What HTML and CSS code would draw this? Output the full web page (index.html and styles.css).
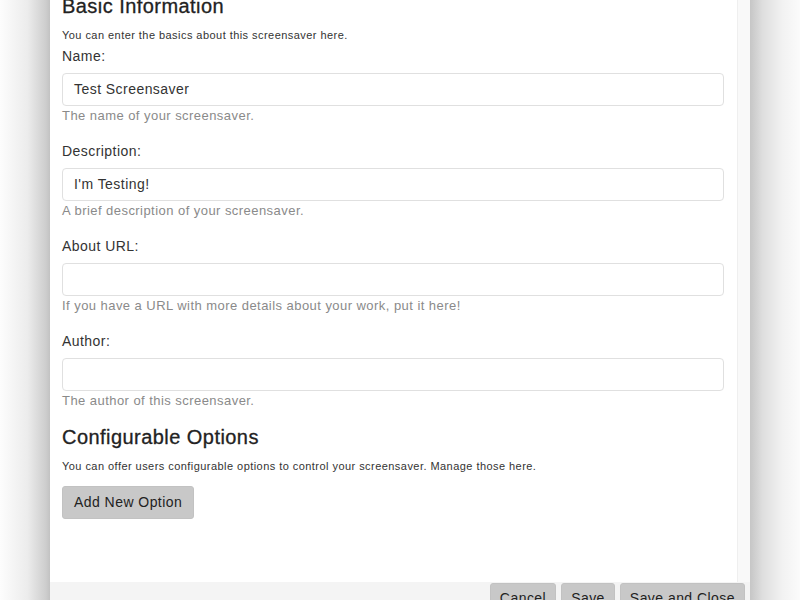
FILE: index.html
```html
<!DOCTYPE html>
<html>
<head>
<meta charset="utf-8">
<link rel="stylesheet" href="styles.css">
</head>
<body>
<div class="desk">
  <div class="shade shade-left"></div>
  <div class="window">
    <div class="scroll">
      <div class="content">
        <h2 class="heading first">Basic Information</h2>
        <p class="intro">You can enter the basics about this screensaver here.</p>
        <div class="group">
          <label class="label">Name:</label>
          <div class="input">Test Screensaver</div>
          <div class="help">The name of your screensaver.</div>
        </div>
        <div class="group">
          <label class="label">Description:</label>
          <div class="input">I'm Testing!</div>
          <div class="help">A brief description of your screensaver.</div>
        </div>
        <div class="group">
          <label class="label">About URL:</label>
          <div class="input"></div>
          <div class="help">If you have a URL with more details about your work, put it here!</div>
        </div>
        <div class="group last">
          <label class="label">Author:</label>
          <div class="input"></div>
          <div class="help">The author of this screensaver.</div>
        </div>
        <h2 class="heading">Configurable Options</h2>
        <p class="intro">You can offer users configurable options to control your screensaver. Manage those here.</p>
        <button class="btn">Add New Option</button>
      </div>
      <div class="track"></div>
    </div>
    <div class="footer">
      <button class="btn">Cancel</button>
      <button class="btn">Save</button>
      <button class="btn">Save and Close</button>
    </div>
  </div>
  <div class="shade shade-right"></div>
</div>
</body>
</html>
```
FILE: styles.css
```css
html, body {
  margin: 0;
  padding: 0;
  height: 100%;
  overflow: hidden;
}
body {
  font-family: "Liberation Sans", Arial, sans-serif;
  color: #333;
  background: #fff;
  letter-spacing: 0.45px;
}
.desk {
  display: flex;
  height: 600px;
  width: 800px;
}
.shade {
  flex: none;
}
.shade-left {
  width: 50px;
  background: linear-gradient(to right, #fdfdfd 0%, #ececec 55%, #cdcdcd 92%, #c2c2c2 100%);
}
.shade-right {
  width: 50px;
  background: linear-gradient(to right, #c6c6c6 0%, #dedede 25%, #f2f2f2 65%, #fbfbfb 100%);
}
.window {
  flex: none;
  width: 700px;
  display: flex;
  flex-direction: column;
  background: #fff;
}
.scroll {
  flex: 1;
  display: flex;
  overflow: hidden;
}
.content {
  flex: 1;
  padding: 0 13px 0 12px;
  margin-top: -6px;
}
.track {
  flex: none;
  width: 12px;
  background: #f9f9f9;
  border-left: 1px solid #efefef;
}
.heading {
  margin: 0;
  font-size: 20px;
  line-height: 24px;
  font-weight: normal;
  color: #222;
  letter-spacing: 0.45px;
  -webkit-text-stroke: 0.3px #222;
}
.intro {
  margin: 9px 0 0 0;
  font-size: 11px;
  line-height: 16px;
  color: #333;
}
.group {
  margin-top: 3px;
  margin-bottom: 15px;
}
.group + .group {
  margin-top: 0;
}
.group.last {
  margin-bottom: 14px;
}
.label {
  display: block;
  font-size: 14px;
  line-height: 20px;
  color: #333;
}
.input {
  margin-top: 7px;
  height: 31px;
  box-sizing: content-box;
  border: 1px solid #e0e0e0;
  border-radius: 4px;
  padding: 0 11px;
  font-size: 14px;
  line-height: 31px;
  color: #333;
  background: #fff;
}
.help {
  font-size: 13px;
  line-height: 20px;
  color: #8a8a8a;
}
.btn {
  font-family: "Liberation Sans", Arial, sans-serif;
  font-size: 14px;
  letter-spacing: 0.45px;
  color: #222;
  background: #c8c8c8;
  border: 1px solid #c2c2c2;
  border-radius: 3px;
  padding: 0 11px;
  height: 33px;
  line-height: 31px;
  margin: 0;
}
.content > .btn {
  margin-top: 12px;
}
.footer {
  flex: none;
  height: 17px;
  background: #f4f4f4;
  display: flex;
  justify-content: flex-end;
  align-items: flex-start;
  gap: 5px;
  padding: 1px 5px 0 0;
  overflow: hidden;
}
.footer .btn {
  flex: none;
  height: 30px;
  padding: 0 9px;
  line-height: 28px;
}
```
